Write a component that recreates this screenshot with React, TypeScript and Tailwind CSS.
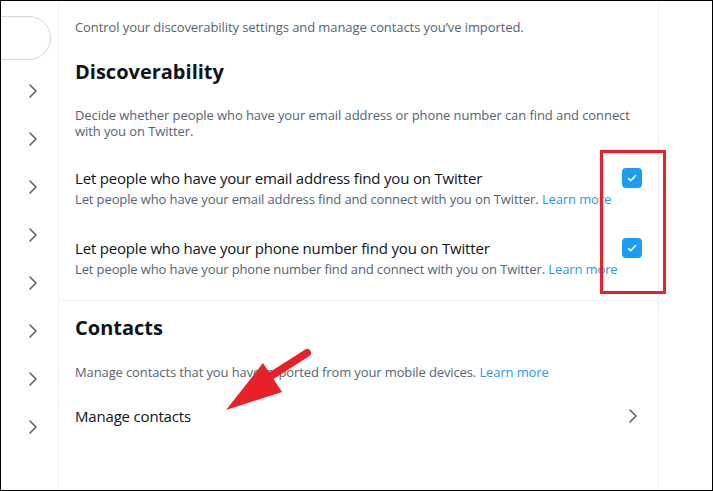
const font = { fontFamily: '"Open Sans", "Noto Sans", sans-serif' };

function Chevron() {
  return (
    <svg width="10" height="16" viewBox="0 0 10 16">
      <path d="M2 2l6 6-6 6" fill="none" stroke="#536471" strokeWidth="1.6" strokeLinecap="round" strokeLinejoin="round" />
    </svg>
  );
}

function Checkbox() {
  return (
    <div className="w-5 h-5 rounded-[4px] bg-[#1d9bf0] flex items-center justify-center">
      <svg width="12" height="12" viewBox="0 0 12 12">
        <path d="M2.5 6.5l2.3 2.3L9.5 3.5" fill="none" stroke="white" strokeWidth="1.6" strokeLinecap="round" strokeLinejoin="round" />
      </svg>
    </div>
  );
}

function ToggleRow({ title, sub, h }: { title: string; sub: string; h: string }) {
  return (
    <div className={`relative flex pl-4 pr-4 pt-[18px] ${h}`}>
      <div className="flex flex-col gap-[3px] whitespace-nowrap">
        <div className="text-[15px] leading-5 tracking-[-0.18px] text-[#0f1419]">{title}</div>
        <div className="text-[13px] leading-4 tracking-[-0.12px] text-[#536471]">
          {sub} <span className="text-[#1d9bf0]">Learn more</span>
        </div>
      </div>
      <div className="absolute right-4 top-[18px]">
        <Checkbox />
      </div>
    </div>
  );
}

export default function App() {
  return (
    <div className="relative w-[713px] h-[491px] overflow-hidden bg-white border border-black flex" style={font}>
      {/* sidebar */}
      <div className="w-[58px] shrink-0 border-r border-[#eff3f4] flex flex-col">
        <div className="h-[44px] mt-[15px] -ml-[40px] w-[90px] rounded-full border border-[#cfd9de]" />
        <div className="mt-[7px] flex flex-col">
          {Array.from({ length: 8 }).map((_, i) => (
            <div key={i} className="h-12 flex items-center pl-[27px]">
              <Chevron />
            </div>
          ))}
        </div>
      </div>

      {/* main column */}
      <div className="w-[600px] shrink-0 border-r border-[#eff3f4] flex flex-col">
        <div className="h-[53px] flex items-center pl-4 text-[13px] tracking-[-0.08px] text-[#536471]">
          Control your discoverability settings and manage contacts you’ve imported.
        </div>
        <div className="h-[36px] flex items-center pl-4 text-[20px] font-bold text-[#0f1419]">Discoverability</div>
        <div className="h-[60px] pt-[17px] pl-4 pr-4 text-[13px] leading-4 tracking-[-0.08px] text-[#536471]">
          Decide whether people who have your email address or phone number can find and connect with you on Twitter.
        </div>
        <ToggleRow
          h="h-[70px]"
          title="Let people who have your email address find you on Twitter"
          sub="Let people who have your email address find and connect with you on Twitter."
        />
        <div className="h-[81px] border-b border-[#eff3f4]">
          <ToggleRow
            h="h-[80px]"
            title="Let people who have your phone number find you on Twitter"
            sub="Let people who have your phone number find and connect with you on Twitter."
          />
        </div>
        <div className="h-[54px] flex items-center pl-4 text-[20px] font-bold text-[#0f1419]">Contacts</div>
        <div className="h-[35px] pt-[9px] pl-4 text-[13px] leading-4 tracking-[-0.12px] text-[#536471]">
          Manage contacts that you have imported from your mobile devices. <span className="text-[#1d9bf0]">Learn more</span>
        </div>
        <div className="h-[52px] flex items-center justify-between pl-4 pr-[20px]">
          <span className="text-[15px] tracking-[-0.18px] text-[#0f1419]">Manage contacts</span>
          <Chevron />
        </div>
      </div>
      <div className="flex-1" />

      {/* annotations */}
      <div className="absolute left-[599px] top-[149px] w-[66px] h-[144px] border-[3px] border-[#e8202a]" />
      <svg className="absolute left-0 top-0" width="713" height="491" viewBox="0 0 713 491">
        <line x1="306" y1="352" x2="262" y2="380" stroke="#e8202a" strokeWidth="8" strokeLinecap="round" />
        <polygon points="225,409 262,362 281,391" fill="#e8202a" />
      </svg>
    </div>
  );
}
